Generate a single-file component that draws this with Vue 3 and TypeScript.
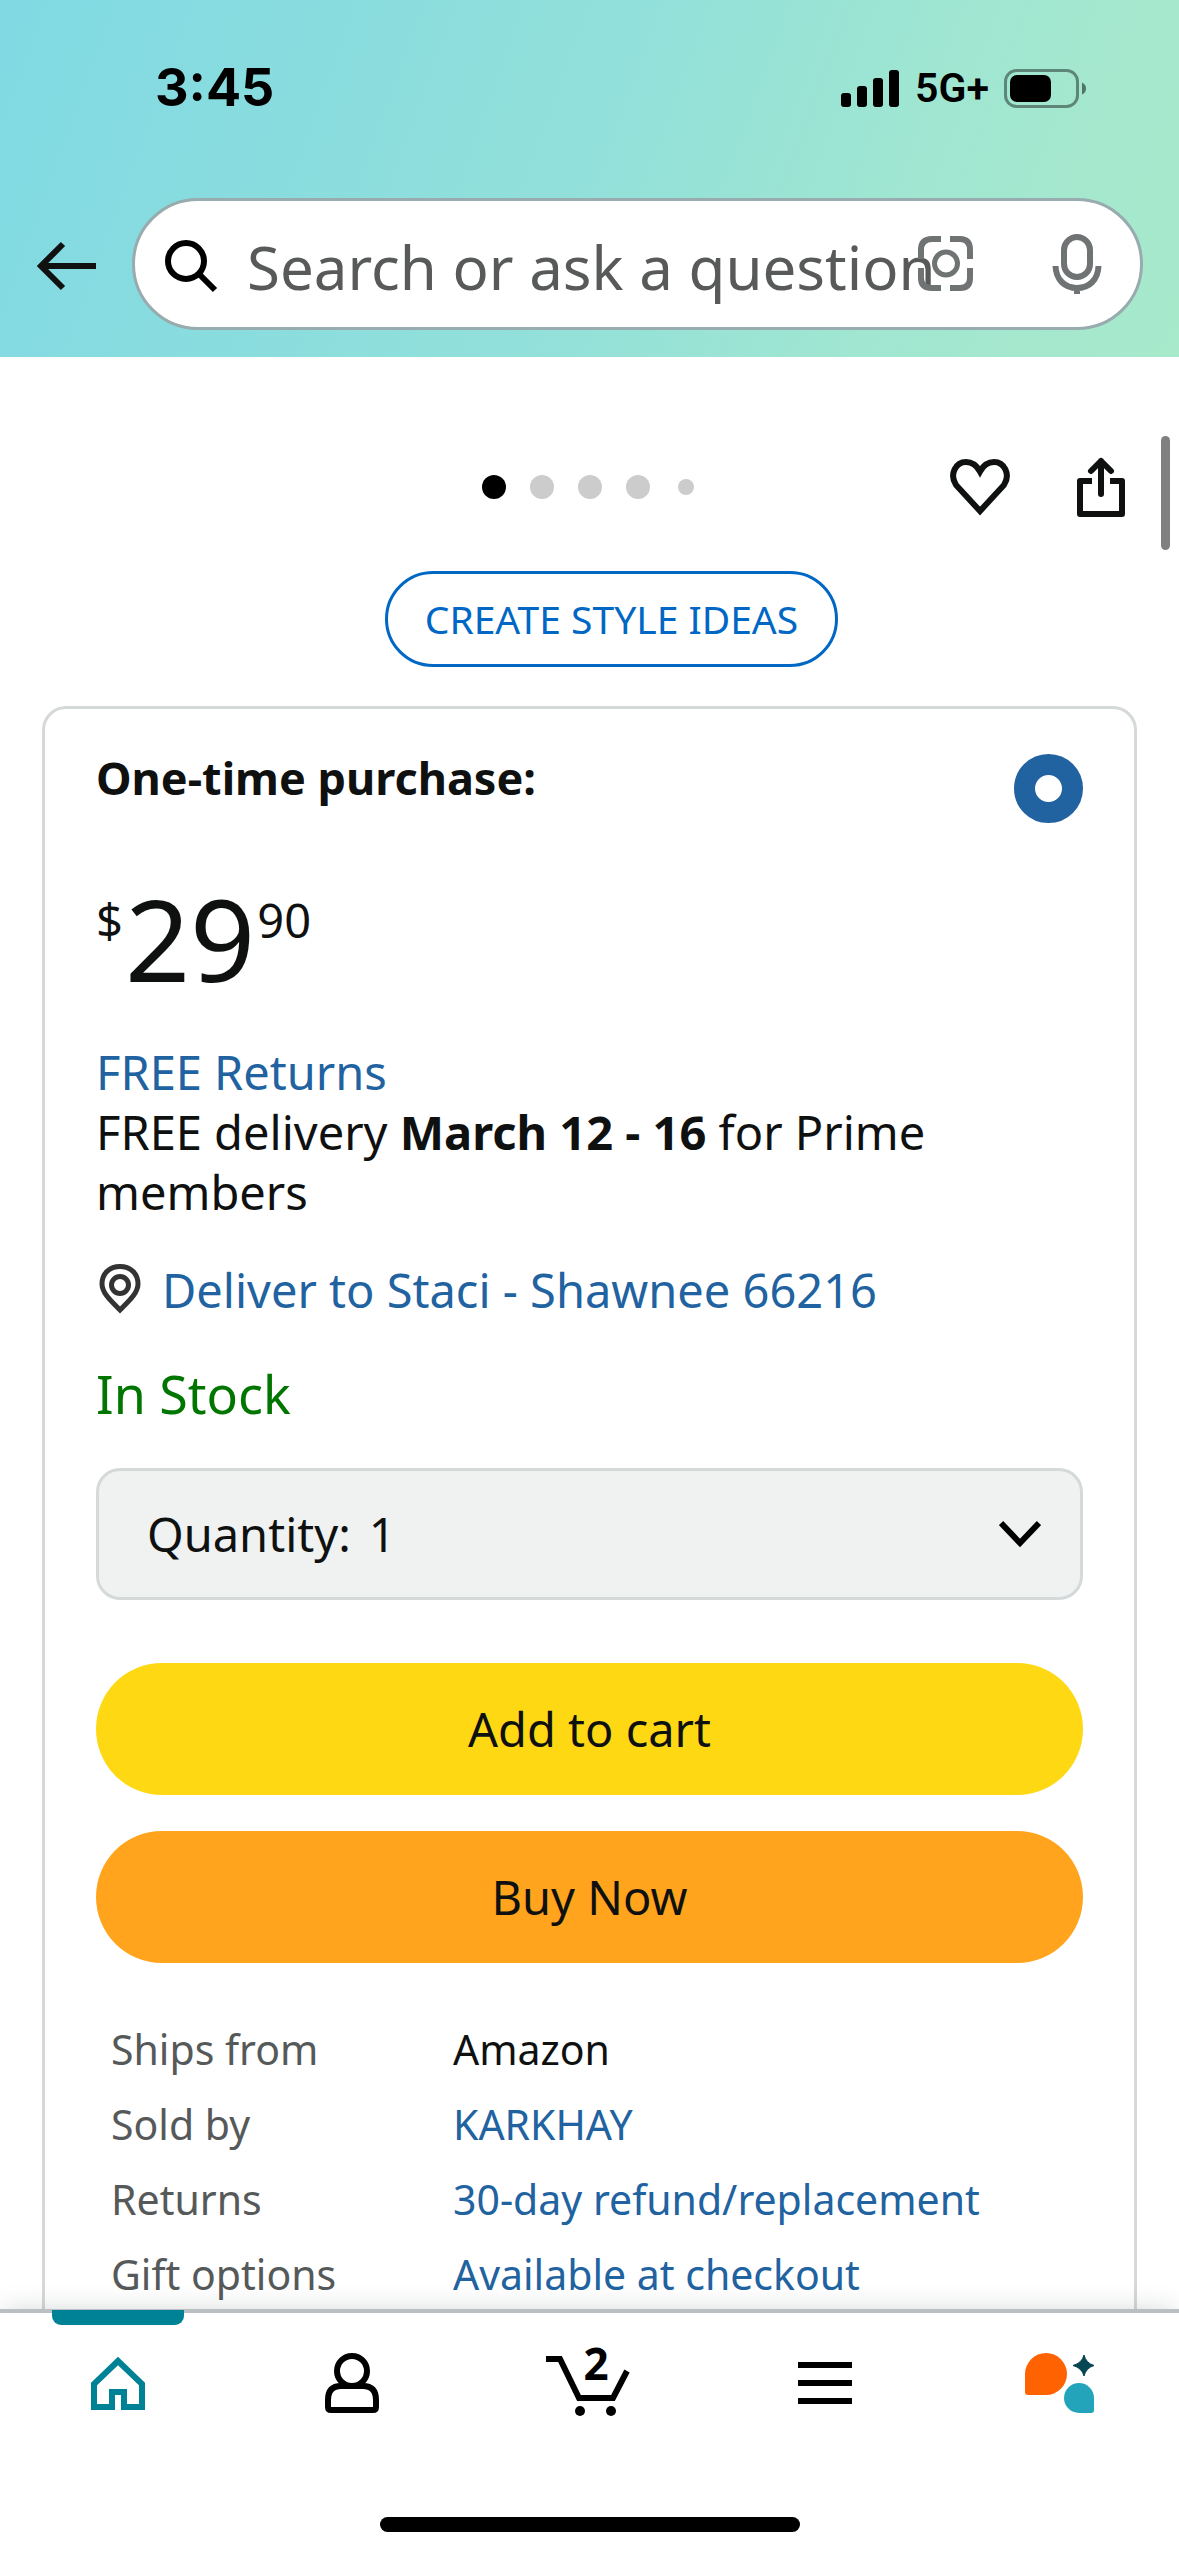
<script setup lang="ts">
import { ref } from 'vue'

interface Fact {
  label: string
  value: string
  link: boolean
}

const facts: Fact[] = [
  { label: 'Ships from', value: 'Amazon', link: false },
  { label: 'Sold by', value: 'KARKHAY', link: true },
  { label: 'Returns', value: '30-day refund/replacement', link: true },
  { label: 'Gift options', value: 'Available at checkout', link: true },
]

const query = ref('')
const quantity = ref('1')
const purchase = ref('once')
const cartCount = ref(2)
</script>

<template>
  <div class="page">
    <header class="top">
      <div class="status">
        <span class="clock">3:45</span>
        <div class="signals">
          <svg class="bars" viewBox="0 0 60 40" aria-hidden="true">
            <rect x="1" y="25" width="10" height="14" rx="3" />
            <rect x="17" y="18" width="10" height="21" rx="3" />
            <rect x="33" y="10" width="10" height="29" rx="3" />
            <rect x="49" y="2" width="10" height="37" rx="3" />
          </svg>
          <span class="network">5G+</span>
          <svg class="battery" viewBox="0 0 84 40" aria-hidden="true">
            <rect x="2.5" y="2.5" width="72" height="36" rx="11" fill="none" stroke="#000" stroke-opacity=".42" stroke-width="3" />
            <rect x="7" y="7" width="41" height="27" rx="7" />
            <path d="M79 14.500q4 2 4 6t-4 6z" fill-opacity=".5" />
          </svg>
        </div>
      </div>
      <div class="search-row">
        <button class="plain" type="button" aria-label="Back">
          <svg class="icon72" viewBox="0 0 72 72" fill="none" stroke="#111" stroke-width="6">
            <path d="M64 38H9M31 16L9 38L31 60" />
          </svg>
        </button>
        <form class="search" role="search" @submit.prevent>
          <svg class="glass" viewBox="0 0 60 60" fill="none" stroke="#000" stroke-width="6">
            <circle cx="26" cy="27" r="18" />
            <path d="M39 40L55 56" />
          </svg>
          <input v-model="query" class="query" type="text" placeholder="Search or ask a question" aria-label="Search or ask a question" />
          <div class="tools">
            <button class="plain" type="button" aria-label="Scan">
              <svg class="icon72" viewBox="0 0 72 72" fill="none" stroke="#6f7373" stroke-width="6">
                <path d="M31 11H22Q11 11 11 22V31M40 11H50Q60 11 60 22V31M60 40V50Q60 60 50 60H40M31 60H22Q11 60 11 50V40" />
                <circle cx="36" cy="35.500" r="11.500" stroke-width="5" />
              </svg>
            </button>
            <button class="plain" type="button" aria-label="Voice search">
              <svg class="icon72" viewBox="0 0 72 72" fill="none" stroke="#6f7373" stroke-width="6">
                <rect x="23" y="9" width="26" height="40" rx="13" />
                <path d="M14.500 38C15 52 24 60 36 60S57 52 57.500 38M36 60V66" />
              </svg>
            </button>
          </div>
        </form>
      </div>
    </header>

    <main class="content">
      <div class="gallery">
        <div class="dots" aria-hidden="true">
          <i class="dot on"></i><i class="dot"></i><i class="dot"></i><i class="dot"></i><i class="dot"><b class="tiny"></b></i>
        </div>
        <div class="actions">
          <button class="plain" type="button" aria-label="Add to list">
            <svg class="icon72" viewBox="0 0 72 72" fill="none" stroke="#0f1111" stroke-width="6">
              <path d="M36 60L12 34C5 23 12 11 22 11C29 11 33 15 36 20.500C39 15 43 11 50 11C60 11 67 23 60 34Z" />
            </svg>
          </button>
          <button class="plain" type="button" aria-label="Share">
            <svg class="icon72" viewBox="0 0 72 72" fill="none" stroke="#0f1111" stroke-width="6" stroke-linejoin="round">
              <path d="M27 30H15V63H57V30H45" />
              <path d="M36 43V10M26 20L36 10L46 20" stroke-linecap="round" />
            </svg>
          </button>
        </div>
      </div>
      <div class="ideas-row">
        <button class="ideas" type="button">CREATE STYLE IDEAS</button>
      </div>

      <section class="card">
        <div class="card-head">
          <label class="option" for="once">One-time purchase:</label>
          <input id="once" v-model="purchase" class="radio" type="radio" name="purchase" value="once" />
        </div>
        <p class="price"><span class="minor">$</span><span class="major">29</span><span class="minor">90</span></p>
        <p class="body"><a href="#returns">FREE Returns</a></p>
        <p class="body">FREE delivery <b>March 12 - 16</b> for Prime members</p>
        <a class="deliver" href="#address">
          <svg class="pin" viewBox="0 0 42 52" fill="none" stroke="#333" stroke-width="5">
            <path d="M21 46C12 37 3 29 3 20C3 9 11 2.500 21 2.500S39 9 39 20C39 29 30 37 21 46Z" />
            <circle cx="21" cy="21" r="8.500" />
          </svg>
          Deliver to Staci - Shawnee 66216
        </a>
        <p class="stock">In Stock</p>
        <div class="quantity">
          <label for="quantity">Quantity:</label>
          <select id="quantity" v-model="quantity">
            <option>1</option>
            <option>2</option>
            <option>3</option>
          </select>
          <svg class="chevron" viewBox="0 0 42 28" fill="none" stroke="#000" stroke-width="6">
            <path d="M2 3L21 23L40 3" />
          </svg>
        </div>
        <div class="buy">
          <button class="pill add" type="button">Add to cart</button>
          <button class="pill now" type="button">Buy Now</button>
        </div>
        <table class="facts">
          <tbody>
            <tr v-for="fact in facts" :key="fact.label">
              <th scope="row">{{ fact.label }}</th>
              <td>
                <a v-if="fact.link" href="#details">{{ fact.value }}</a>
                <template v-else>{{ fact.value }}</template>
              </td>
            </tr>
          </tbody>
        </table>
      </section>
      <div class="scroll-thumb" aria-hidden="true"></div>
    </main>

    <nav class="tabs" aria-label="Main">
      <div class="tab-row">
        <button class="tab active" type="button" aria-label="Home">
          <svg viewBox="0 0 96 96" fill="none" stroke="#008296" stroke-width="6">
            <path d="M24 72V49L48 26L72 49V72H54V57H42V72Z" />
          </svg>
        </button>
        <button class="tab" type="button" aria-label="Account">
          <svg viewBox="0 0 96 96" fill="none" stroke="#000" stroke-width="6">
            <circle cx="46" cy="36" r="15" />
            <path d="M25 75H67Q70 75 70 72V65Q70 51 57 51H35Q22 51 22 65V72Q22 75 25 75Z" />
          </svg>
        </button>
        <button class="tab" type="button" aria-label="Cart">
          <svg viewBox="0 0 96 96" fill="none" stroke="#000" stroke-width="6">
            <path d="M5 24H19L38 63H72L86 36" />
            <circle cx="39" cy="76" r="5" fill="#000" stroke="none" />
            <circle cx="70" cy="76" r="5" fill="#000" stroke="none" />
          </svg>
          <span class="count">{{ cartCount }}</span>
        </button>
        <button class="tab" type="button" aria-label="Menu">
          <svg viewBox="0 0 96 96" fill="none" stroke="#000" stroke-width="6">
            <path d="M21 30H75M21 48H75M21 66H75" />
          </svg>
        </button>
        <button class="tab" type="button" aria-label="Assistant">
          <svg viewBox="0 0 96 96">
            <path d="M12 39A21 21 0 1 1 33 60H15Q12 60 12 57Z" fill="#ff6200" />
            <path d="M81 63A15 15 0 1 0 66 78H78Q81 78 81 75Z" fill="#24a4bb" />
            <path d="M71 20Q73 28 81 30.500Q73 33 71 41Q69 33 60 30.500Q69 28 71 20Z" fill="#064652" stroke="#064652" stroke-linejoin="round" />
          </svg>
        </button>
      </div>
      <div class="home-bar" aria-hidden="true"></div>
    </nav>
  </div>
</template>

<style>
body {
  margin: 0;
  background: #fff;
}
</style>

<style scoped>
* {
  box-sizing: border-box;
}
.page {
  display: flex;
  flex-direction: column;
  height: 100vh;
  color: #0f1111;
  font-family: "Noto Sans", "Open Sans", sans-serif;
  font-size: 47px;
  line-height: 60px;
}
button,
input,
select {
  font: inherit;
  color: inherit;
  margin: 0;
}
button {
  cursor: pointer;
}
svg {
  display: block;
  flex: none;
}
p {
  margin: 0;
}
a {
  color: #2162a1;
  text-decoration: none;
}
.plain {
  padding: 0;
  border: 0;
  background: none;
}
.icon72 {
  width: 72px;
  height: 72px;
}

.top {
  flex: none;
  padding-bottom: 27px;
  background: linear-gradient(110deg, #80d9e3, #92e0da 50%, #a0e6d1 75%, #a8e9cb);
}
.status {
  display: flex;
  align-items: center;
  justify-content: space-between;
  height: 176px;
  margin-bottom: 22px;
  padding: 0 92px 0 155px;
  color: #000;
}
.clock {
  font-family: Inter, sans-serif;
  font-size: 52px;
  font-weight: 700;
}
.signals {
  display: flex;
  align-items: center;
}
.bars {
  width: 60px;
  height: 40px;
}
.network {
  margin: 0 14px 0 15px;
  font-family: Roboto, sans-serif;
  font-size: 41px;
  font-weight: 600;
}
.battery {
  width: 84px;
  height: 40px;
}
.search-row {
  display: flex;
  align-items: center;
  gap: 28px;
  padding: 0 36px 0 32px;
}
.search {
  position: relative;
  display: flex;
  flex: 1;
  align-items: center;
  gap: 27px;
  min-width: 0;
  height: 132px;
  padding: 0 25px;
  border: 3px solid #98abae;
  border-radius: 66px;
  background: #fff;
}
.glass {
  width: 60px;
  height: 60px;
}
.query {
  flex: 1;
  min-width: 0;
  height: 100px;
  padding: 6px 0 0;
  border: 0;
  outline: 0;
  background: none;
  font-size: 60px;
}
.query::placeholder {
  color: #585959;
  opacity: 1;
}
.tools {
  position: absolute;
  top: 27px;
  right: 27px;
  display: flex;
  gap: 59px;
}

.content {
  position: relative;
  flex: 1;
  min-height: 0;
  padding: 94px 42px 0;
  overflow: hidden;
}
.gallery {
  display: grid;
  grid-template-columns: 1fr auto 1fr;
  align-items: center;
}
.dots {
  display: flex;
  grid-column: 2;
  gap: 24px;
}
.dot {
  display: grid;
  width: 24px;
  height: 24px;
  place-items: center;
  border-radius: 50%;
  background: #ccc;
}
.dot.on {
  background: #000;
}
.dot:last-child {
  background: none;
}
.tiny {
  width: 16px;
  height: 16px;
  border-radius: 50%;
  background: #ccc;
}
.actions {
  display: flex;
  justify-content: flex-end;
  gap: 49px;
}
.ideas-row {
  display: flex;
  justify-content: center;
  margin: 48px 0 39px;
  padding-left: 44px;
}
.ideas {
  height: 96px;
  padding: 0 37px;
  border: 3px solid #0068c4;
  border-radius: 48px;
  background: #fff;
  color: #0068c4;
  font-size: 39px;
}
.card {
  padding: 39px 51px;
  border: 3px solid #d5d9d9;
  border-radius: 24px;
}
.card-head {
  display: flex;
  align-items: flex-start;
  justify-content: space-between;
  margin-bottom: 59px;
}
.option {
  font-size: 45px;
  font-weight: 700;
}
.radio {
  width: 69px;
  height: 69px;
  margin-top: 6px;
  appearance: none;
  border: 21px solid #2162a1;
  border-radius: 50%;
  background: #fff;
}
.price {
  display: flex;
  align-items: flex-start;
  gap: 2px;
  margin-bottom: 48px;
}
.major {
  font-size: 114px;
  line-height: 112px;
}
.minor {
  padding-top: 8px;
}
.deliver {
  display: flex;
  align-items: center;
  gap: 21px;
  margin: 38px 0 44px 3px;
}
.pin {
  width: 42px;
  height: 52px;
}
.stock {
  margin-bottom: 44px;
  color: #007600;
  font-size: 52px;
}
.quantity {
  display: flex;
  align-items: center;
  gap: 18px;
  height: 132px;
  padding: 0 39px 0 48px;
  border: 3px solid #d5d9d9;
  border-radius: 24px;
  background: #f0f2f2;
}
.quantity select {
  flex: 1;
  height: 100px;
  padding: 0;
  appearance: none;
  border: 0;
  background: none;
}
.chevron {
  width: 42px;
  height: 28px;
}
.buy {
  display: flex;
  flex-direction: column;
  gap: 36px;
  margin: 63px 0 49px;
}
.pill {
  height: 132px;
  border: 0;
  border-radius: 66px;
}
.add {
  background: #ffd814;
}
.now {
  background: #ffa41c;
}
.facts {
  width: 100%;
  border-spacing: 0;
  font-size: 41px;
  line-height: 75px;
  text-align: left;
}
.facts th {
  width: 357px;
  padding: 0 0 0 15px;
  color: #565959;
  font-weight: 400;
}
.facts td {
  padding: 0;
}
.scroll-thumb {
  position: absolute;
  top: 79px;
  right: 9px;
  width: 9px;
  height: 114px;
  border-radius: 5px;
  background: #808080;
}

.tabs {
  position: relative;
  flex: none;
  padding-bottom: 24px;
  border-top: 4px solid #b9bfc2;
  background: #fff;
  box-shadow: 0 -4px 24px -4px rgba(0, 40, 40, 0.16);
}
.tab-row {
  display: grid;
  grid-template-columns: repeat(5, 1fr);
}
.tab {
  position: relative;
  display: grid;
  height: 140px;
  padding: 0;
  place-items: center;
  border: 0;
  background: none;
}
.tab svg {
  width: 96px;
  height: 96px;
}
.tab.active::before {
  position: absolute;
  top: -3px;
  left: 50%;
  width: 132px;
  height: 15px;
  margin-left: -66px;
  border-radius: 0 0 9px 9px;
  background: #008296;
  content: "";
}
.count {
  position: absolute;
  top: 30px;
  left: 50%;
  margin-left: -6px;
  color: #000;
  font-size: 44px;
  font-weight: 700;
  line-height: 40px;
}
.home-bar {
  width: 420px;
  height: 15px;
  margin: 64px auto 0;
  border-radius: 8px;
  background: #000;
}
</style>
